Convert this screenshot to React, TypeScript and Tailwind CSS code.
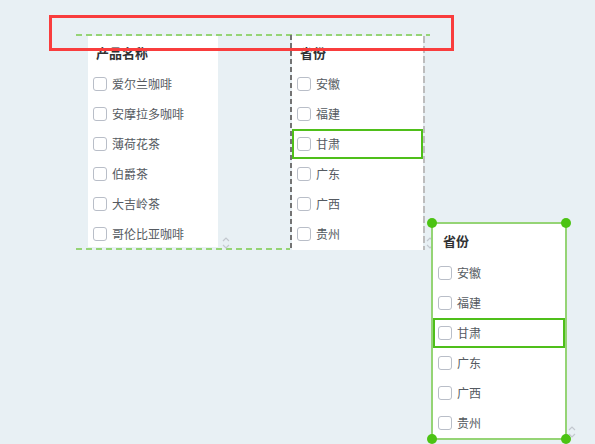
import React from 'react'

const produtos = ['爱尔兰咖啡', '安摩拉多咖啡', '薄荷花茶', '伯爵茶', '大吉岭茶', '哥伦比亚咖啡']
const provincias = ['安徽', '福建', '甘肃', '广东', '广西', '贵州']

function Caixa() {
  return <span className="w-[14px] h-[14px] shrink-0 rounded-[3px] border border-[#b9bec8] bg-white" />
}

function Lista({ titulo, itens, destaque, topo }: { titulo: string; itens: string[]; destaque?: number; topo: string }) {
  return (
    <div className="flex flex-col">
      <div className={`${topo} flex items-center pl-[8px] text-[13px] font-bold text-[#303133]`}>{titulo}</div>
      {itens.map((item, i) => (
        <div
          key={item}
          className={`h-[30px] shrink-0 flex items-center gap-[5px] pl-[5px] text-[12px] text-[#555a61] ${
            i === destaque ? 'outline-2 -outline-offset-2 outline-[#4fbf1a]' : ''
          }`}
        >
          <Caixa />
          <span>{item}</span>
        </div>
      ))}
    </div>
  )
}

function Setas({ className }: { className: string }) {
  return (
    <svg className={`absolute ${className}`} width="8" height="12" viewBox="0 0 8 12" fill="none">
      <polyline points="1,4 4,1 7,4" stroke="#c3c8cf" strokeWidth="1.2" />
      <polyline points="1,8 4,11 7,8" stroke="#c3c8cf" strokeWidth="1.2" />
    </svg>
  )
}

export default function App() {
  return (
    <div className="relative w-[595px] h-[444px] overflow-hidden bg-[#e8f0f4] font-['Noto_Sans_CJK_SC','Noto_Sans',sans-serif]">
      {/* painel produtos */}
      <div className="absolute left-[88px] top-[36px] w-[130px] h-[211px] bg-white overflow-hidden">
        <Lista titulo="产品名称" itens={produtos} topo="h-[33px]" />
      </div>

      {/* painel provincias */}
      <div className="absolute left-[292px] top-[36px] w-[131px] h-[214px] bg-white overflow-hidden">
        <Lista titulo="省份" itens={provincias} destaque={2} topo="h-[33px]" />
      </div>

      {/* linhas tracejadas */}
      <div className="absolute left-[76px] top-[34px] w-[354px] h-[2px] bg-[repeating-linear-gradient(90deg,#95d475_0_6px,transparent_6px_10px)]" />
      <div className="absolute left-[76px] top-[248px] w-[214px] h-[2px] bg-[repeating-linear-gradient(90deg,#95d475_0_6px,transparent_6px_10px)]" />
      <div className="absolute left-[290px] top-[35px] w-[2px] h-[215px] bg-[repeating-linear-gradient(180deg,#737373_0_5px,transparent_5px_8px)]" />
      <div className="absolute left-[423px] top-[36px] w-[2px] h-[214px] bg-[repeating-linear-gradient(180deg,#bdbdbd_0_7px,transparent_7px_10px)]" />

      <Setas className="left-[222px] top-[237px]" />
      <Setas className="left-[426px] top-[237px]" />

      {/* painel selecionado */}
      <div className="absolute left-[431px] top-[222px] w-[136px] h-[218px] border-2 border-[#95d475] bg-white">
        <Lista titulo="省份" itens={provincias} destaque={2} topo="h-[34px] pl-[10px]" />
      </div>
      <span className="absolute left-[427px] top-[218px] w-[10px] h-[10px] rounded-full bg-[#4cc313]" />
      <span className="absolute left-[561px] top-[218px] w-[10px] h-[10px] rounded-full bg-[#4cc313]" />
      <span className="absolute left-[427px] top-[434px] w-[10px] h-[10px] rounded-full bg-[#4cc313]" />
      <span className="absolute left-[561px] top-[434px] w-[10px] h-[10px] rounded-full bg-[#4cc313]" />
      <Setas className="left-[568px] top-[426px]" />

      {/* retangulo vermelho */}
      <div className="absolute left-[49px] top-[15px] w-[405px] h-[36px] border-[3px] border-[#f93d3d]" />
    </div>
  )
}
